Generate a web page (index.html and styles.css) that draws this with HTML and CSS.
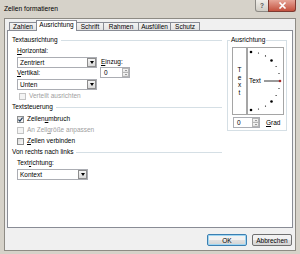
FILE: index.html
```html
<!DOCTYPE html>
<html lang="de">
<head>
    <meta charset="UTF-8">
    <title>Zellen formatieren</title>
    <link rel="stylesheet" href="styles.css">
</head>
<body>
    <div class="window">
        <div class="titlebar">
            <span class="title">Zellen formatieren</span>
            <div class="caption-buttons">
                <span class="cap-btn help">?</span>
                <span class="cap-btn close">
                    <svg width="9" height="7" viewBox="0 0 9 7"><path d="M1.5 0.5 L7.5 6.5 M7.5 0.5 L1.5 6.5" stroke="#fff" stroke-width="1.6"/></svg>
                </span>
            </div>
        </div>
        <div class="client">
            <div class="tabs">
                <div class="tab tab-zahlen">Zahlen</div>
                <div class="tab tab-active">Ausrichtung</div>
                <div class="tab tab-schrift">Schrift</div>
                <div class="tab tab-rahmen">Rahmen</div>
                <div class="tab tab-fill">Ausfüllen</div>
                <div class="tab tab-schutz">Schutz</div>
            </div>
            <div class="panel">
                <div class="left-col">
                    <div class="section section-first"><span>Textausrichtung</span></div>
                    <div class="align-row">
                        <div class="align-main">
                            <div class="label"><u>H</u>orizontal:</div>
                            <div class="combo combo-wide"><span>Zentriert</span><span class="drop"></span></div>
                            <div class="label label-gap"><u>V</u>ertikal:</div>
                            <div class="combo combo-wide"><span>Unten</span><span class="drop"></span></div>
                        </div>
                        <div class="align-indent">
                            <div class="label label-indent"><u>E</u>inzug:</div>
                            <div class="spin spin-indent">
                                <span>0</span>
                                <span class="spin-arrows"><span class="up"></span><span class="down"></span></span>
                            </div>
                        </div>
                    </div>
                    <div class="check check-deep disabled check-first"><span class="box"></span><span>Verteilt ausrichten</span></div>

                    <div class="section"><span>Textsteuerung</span></div>
                    <div class="check check-wrap">
                        <span class="box">
                            <svg width="5" height="5" viewBox="0 0 5 5"><path d="M0.4 2.6 L1.9 4.2 L4.6 0.6" fill="none" stroke="#1e395b" stroke-width="1.1"/></svg>
                        </span>
                        <span>Zeilen<u>u</u>mbruch</span>
                    </div>
                    <div class="check disabled"><span class="box"></span><span>An Zell<u>g</u>röße anpassen</span></div>
                    <div class="check"><span class="box"></span><span><u>Z</u>ellen verbinden</span></div>

                    <div class="section"><span>Von rechts nach links</span></div>
                    <div class="label label-dir">Text<u>r</u>ichtung:</div>
                    <div class="combo combo-short"><span>Kontext</span><span class="drop"></span></div>
                </div>

                <fieldset class="orient">
                    <legend>Ausrichtung</legend>
                    <div class="orient-boxes">
                        <div class="vtext"><span>T</span><span>e</span><span>x</span><span>t</span></div>
                        <div class="dial">
                            <svg width="35" height="66" viewBox="0 0 35 66">
                                <circle cx="3" cy="4" r="1.3"/>
                                <circle cx="10.5" cy="5" r="0.6"/>
                                <circle cx="17.5" cy="7.9" r="0.6"/>
                                <circle cx="23.5" cy="12.5" r="1.3"/>
                                <circle cx="28.1" cy="18.5" r="0.6"/>
                                <circle cx="31" cy="25.5" r="0.6"/>
                                <circle cx="31" cy="40.5" r="0.6"/>
                                <circle cx="28.1" cy="47.5" r="0.6"/>
                                <circle cx="23.5" cy="53.5" r="1.3"/>
                                <circle cx="17.5" cy="58.1" r="0.6"/>
                                <circle cx="10.5" cy="61" r="0.6"/>
                                <circle cx="3" cy="62" r="1.3"/>
                                <text x="1" y="35.4" class="dial-text">Text</text>
                                <line x1="16" y1="33" x2="31" y2="33" stroke="#000" stroke-width="0.8"/>
                                <circle cx="32" cy="33" r="1.3" fill="#a52a2a"/>
                            </svg>
                        </div>
                    </div>
                    <div class="deg-row">
                        <div class="spin spin-deg">
                            <span>0</span>
                            <span class="spin-arrows"><span class="up"></span><span class="down"></span></span>
                        </div>
                        <span class="deg-label"><u>G</u>rad</span>
                    </div>
                </fieldset>
            </div>
            <div class="buttons">
                <div class="btn btn-default">OK</div>
                <div class="btn">Abbrechen</div>
            </div>
        </div>
    </div>
</body>
</html>
```
FILE: styles.css
```css
body {
    margin: 0;
    font-family: 'Liberation Sans', Arial, sans-serif;
    font-size: 6.5px;
    color: #000;
}
.window {
    width: 300px;
    height: 254px;
    box-sizing: border-box;
    background-color: #d6d2c9;
    padding: 0 4px 3px;
    display: flex;
    flex-direction: column;
}
.titlebar {
    height: 18px;
    flex: none;
    display: flex;
    justify-content: space-between;
    align-items: flex-start;
}
.title {
    margin-top: 5px;
    line-height: 7px;
    font-size: 6.7px;
}
.caption-buttons {
    display: flex;
}
.cap-btn {
    height: 12px;
    box-sizing: border-box;
    border: 1px solid #8c8a85;
    border-top: 0;
    display: flex;
    align-items: center;
    justify-content: center;
}
.help {
    width: 14px;
    background: linear-gradient(#f0eee9, #d0cdc5);
    border-radius: 0 0 0 3px;
    font-weight: bold;
    color: #555;
}
.close {
    width: 28px;
    margin-left: -1px;
    background: linear-gradient(#e6a597, #c4513e);
    border-color: #7e3a30;
    border-radius: 0 0 3px 0;
}
.client {
    flex: 1;
    background-color: #f0f0f0;
    border: 1px solid #8e8b84;
    padding: 1px 2px 4px;
    display: flex;
    flex-direction: column;
}
.tabs {
    height: 10px;
    flex: none;
    display: flex;
    align-items: flex-end;
    padding-left: 2px;
    position: relative;
    z-index: 1;
}
.tab {
    height: 8px;
    box-sizing: border-box;
    border: 1px solid #898c95;
    border-bottom: 0;
    background: linear-gradient(#f3f3f3, #e3e3e3);
    line-height: 7px;
    text-align: center;
    margin-left: -1px;
}
.tab-zahlen {
    width: 28px;
    margin-left: 0;
}
.tab-active {
    width: 41px;
    height: 11px;
    margin-bottom: -1px;
    background: #fff;
    line-height: 8px;
    position: relative;
    z-index: 2;
}
.tab-schrift { width: 28px; }
.tab-rahmen { width: 36px; }
.tab-fill { width: 33px; }
.tab-schutz { width: 30px; }
.panel {
    height: 198px;
    flex: none;
    box-sizing: border-box;
    border: 1px solid #898c95;
    background: #fff;
    display: flex;
    align-items: flex-start;
    padding: 0 5px 0 4px;
}
.left-col {
    width: 210px;
}
.section {
    display: flex;
    align-items: center;
    gap: 3px;
    line-height: 8px;
    margin-top: 3px;
}
.section::after {
    content: "";
    flex: 1;
    height: 1px;
    background-color: #d5dfe5;
}
.section-first {
    margin-top: 5px;
}
.label {
    line-height: 8px;
}
.label-gap {
    margin-top: 1px;
}
.label-indent {
    padding-left: 1px;
}
.label-dir {
    margin-top: 3px;
    padding-left: 5px;
}
.align-row {
    display: flex;
    margin-top: 3px;
    padding-left: 5px;
}
.align-main {
    width: 80px;
}
.align-indent {
    margin-left: 3px;
    padding-top: 11px;
}
.combo {
    height: 11px;
    box-sizing: border-box;
    border: 1px solid #abadb3;
    background: #fff;
    margin-top: 2px;
    padding-left: 2px;
    display: flex;
    align-items: center;
    justify-content: space-between;
}
.combo-wide {
    width: 80px;
}
.combo-short {
    width: 71px;
    margin-left: 5px;
}
.drop {
    width: 9px;
    height: 9px;
    box-sizing: border-box;
    border: 1px solid #8d8d8d;
    background: linear-gradient(#f6f6f6, #d9d9d9);
    display: flex;
    align-items: center;
    justify-content: center;
}
.drop::after {
    content: "";
    border-left: 2.5px solid transparent;
    border-right: 2.5px solid transparent;
    border-top: 3px solid #000;
}
.spin {
    height: 11px;
    box-sizing: border-box;
    border: 1px solid #abadb3;
    background: #fff;
    padding-left: 3px;
    display: flex;
    align-items: center;
    justify-content: space-between;
}
.spin-indent {
    width: 30px;
    margin-top: 1px;
}
.spin-deg {
    width: 27px;
}
.spin-arrows {
    width: 7px;
    height: 9px;
    display: flex;
    flex-direction: column;
}
.spin-arrows span {
    flex: 1;
    box-sizing: border-box;
    border: 1px solid #b5b5b5;
    background: linear-gradient(#f6f6f6, #e2e2e2);
    display: flex;
    align-items: center;
    justify-content: center;
}
.spin-arrows .down {
    border-top: 0;
}
.spin-arrows .up::after,
.spin-arrows .down::after {
    content: "";
    border-left: 1.5px solid transparent;
    border-right: 1.5px solid transparent;
}
.spin-arrows .up::after {
    border-bottom: 1.5px solid #444;
}
.spin-arrows .down::after {
    border-top: 1.5px solid #444;
}
.check {
    display: flex;
    align-items: center;
    gap: 3px;
    height: 8px;
    line-height: 8px;
    margin-top: 3px;
    padding-left: 5px;
}
.check-first {
    margin-top: 2px;
}
.check-deep {
    padding-left: 7px;
}
.check-wrap {
    margin-top: 4px;
}
.check .box {
    width: 7px;
    height: 7px;
    box-sizing: border-box;
    border: 1px solid #8e8f8f;
    background: linear-gradient(135deg, #dcdcdc, #fbfbfb);
    display: flex;
    align-items: center;
    justify-content: center;
}
.check.disabled {
    color: #a0a0a0;
}
.check.disabled .box {
    border-color: #c4c4c4;
    background: #f4f4f4;
}
.orient {
    width: 60px;
    box-sizing: border-box;
    margin: 5px 0 0 5px;
    padding: 3px 2px 2px 4px;
    border: 1px solid #d5dfe5;
    min-width: 0;
}
.orient legend {
    padding: 0 1px;
    margin-left: -2px;
    line-height: 8px;
}
.orient-boxes {
    display: flex;
}
.vtext {
    width: 15px;
    height: 68px;
    box-sizing: border-box;
    border: 1px solid #a5a5a5;
    display: flex;
    flex-direction: column;
    align-items: center;
    justify-content: center;
    line-height: 7.5px;
}
.dial {
    width: 37px;
    height: 68px;
    box-sizing: border-box;
    border: 1px solid #a5a5a5;
}
.dial svg {
    display: block;
}
.dial-text {
    font-family: 'Liberation Sans', Arial, sans-serif;
    font-size: 6.5px;
}
.deg-row {
    display: flex;
    align-items: center;
    margin-top: 2px;
    padding-left: 1px;
}
.deg-label {
    margin-left: 6px;
}
.buttons {
    display: flex;
    justify-content: flex-end;
    gap: 5px;
    margin-top: 6px;
    padding-right: 1px;
}
.btn {
    width: 40px;
    height: 12px;
    box-sizing: border-box;
    border: 1px solid #707070;
    border-radius: 2px;
    background: linear-gradient(#f2f2f2 50%, #e1e1e1 50%, #d3d3d3);
    display: flex;
    align-items: center;
    justify-content: center;
}
.btn-default {
    border-color: #3c7fb1;
    box-shadow: inset 0 0 0 1px #9fd6f2;
}
```
